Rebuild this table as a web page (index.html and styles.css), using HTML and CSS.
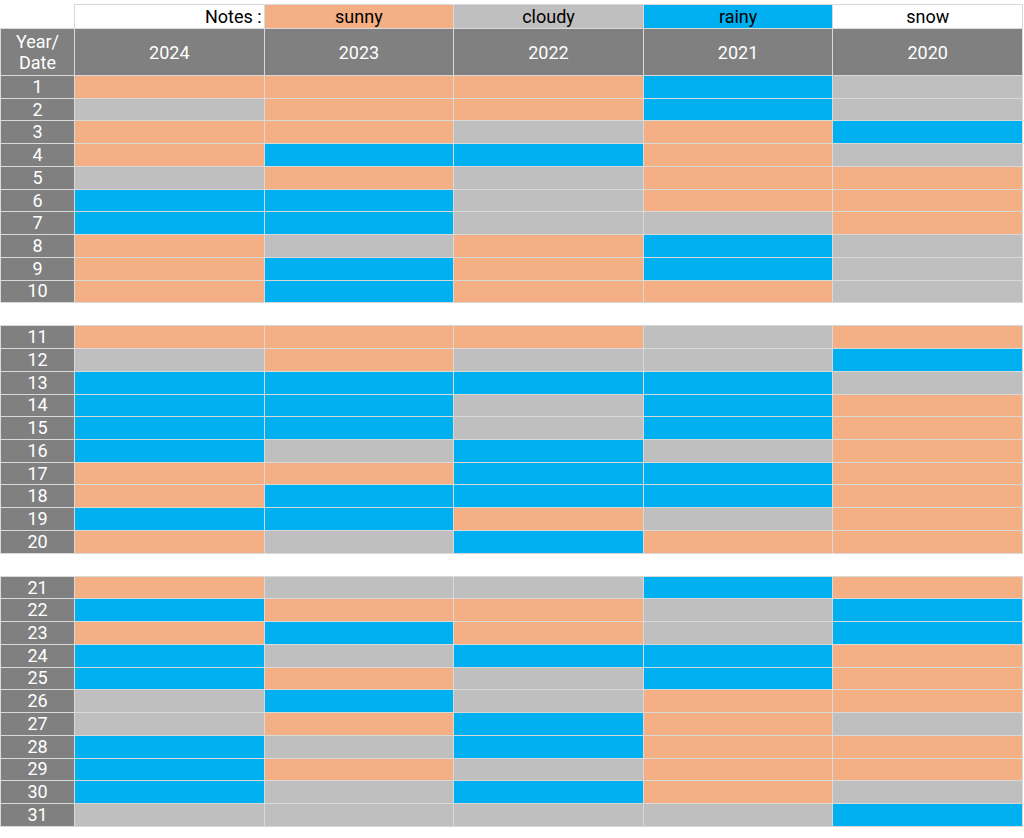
FILE: index.html
```html
<!DOCTYPE html>
<html lang="en">
<head>
<meta charset="utf-8">
<title>Weather by date</title>
<link rel="stylesheet" href="styles.css">
</head>
<body>
<table class="sheet">
  <colgroup>
    <col class="c-date">
    <col class="c-year"><col class="c-year"><col class="c-year"><col class="c-year"><col class="c-year">
  </colgroup>
  <thead>
    <tr class="legend">
      <td class="blank"></td>
      <td class="notes">Notes :</td>
      <td class="s">sunny</td>
      <td class="c">cloudy</td>
      <td class="r">rainy</td>
      <td class="w">snow</td>
    </tr>
    <tr class="head">
      <th>Year/<br>Date</th>
      <th>2024</th><th>2023</th><th>2022</th><th>2021</th><th>2020</th>
    </tr>
  </thead>
  <tbody id="body"></tbody>
</table>
<script src="app.js"></script>
</body>
</html>
```

FILE: app.js
```js
const data = [
  "SSSRC","CSSRC","SSCSR","SRRSC","CSCSS","RRCSS","RRCCS","SCSRC","SRSRC","SRSSC",
  "SSSCS","CSCCR","RRRRC","RRCRS","RRCRS","RCRCS","SSRRS","SRRRS","RRSCS","SCRSS",
  "SCCRS","RSSCR","SRSCR","RCRRS","RSCRS","CRCSS","CSRSC","RCRSS","RSCSS","RCRSC","CCCCR"
];
const body = document.getElementById("body");
const cls = { S: "s", C: "c", R: "r" };
data.forEach((row, i) => {
  if (i === 10 || i === 20) {
    const sp = document.createElement("tr");
    sp.className = "spacer";
    sp.innerHTML = "<td></td>".repeat(6);
    body.appendChild(sp);
  }
  const tr = document.createElement("tr");
  tr.className = "day";
  let html = "<th>" + (i + 1) + "</th>";
  for (const ch of row) html += '<td class="' + cls[ch] + '"></td>';
  tr.innerHTML = html;
  body.appendChild(tr);
});
```

FILE: styles.css
```css
html, body {
  margin: 0;
  padding: 0;
  background: #ffffff;
}
body {
  padding-top: 4px;
  font-family: Roboto, "Liberation Sans", sans-serif;
}
.sheet {
  border-collapse: collapse;
  table-layout: fixed;
  width: 1023px;
}
.c-date { width: 74px; }
.sheet td, .sheet th {
  padding: 0;
  border: 1px solid #d9d9d9;
  text-align: center;
  vertical-align: middle;
  font-weight: 400;
  font-size: 18px;
}
.legend { height: 24px; }
.legend td { color: #000; line-height: 22px; }
.legend .blank { border: none; }
.legend .notes { text-align: right; padding-right: 2px; background: #fff; }
.head { height: 47px; }
.head th {
  background: #808080;
  color: #fff;
  line-height: 21px;
}
.day { height: 22.74px; }
.day th {
  background: #808080;
  color: #fff;
  line-height: 20px;
}
.spacer { height: 23px; }
.spacer td { border: none; }
.s { background: #f4b084; }
.c { background: #bfbfbf; }
.r { background: #00b0f0; }
.w { background: #ffffff; }
```
